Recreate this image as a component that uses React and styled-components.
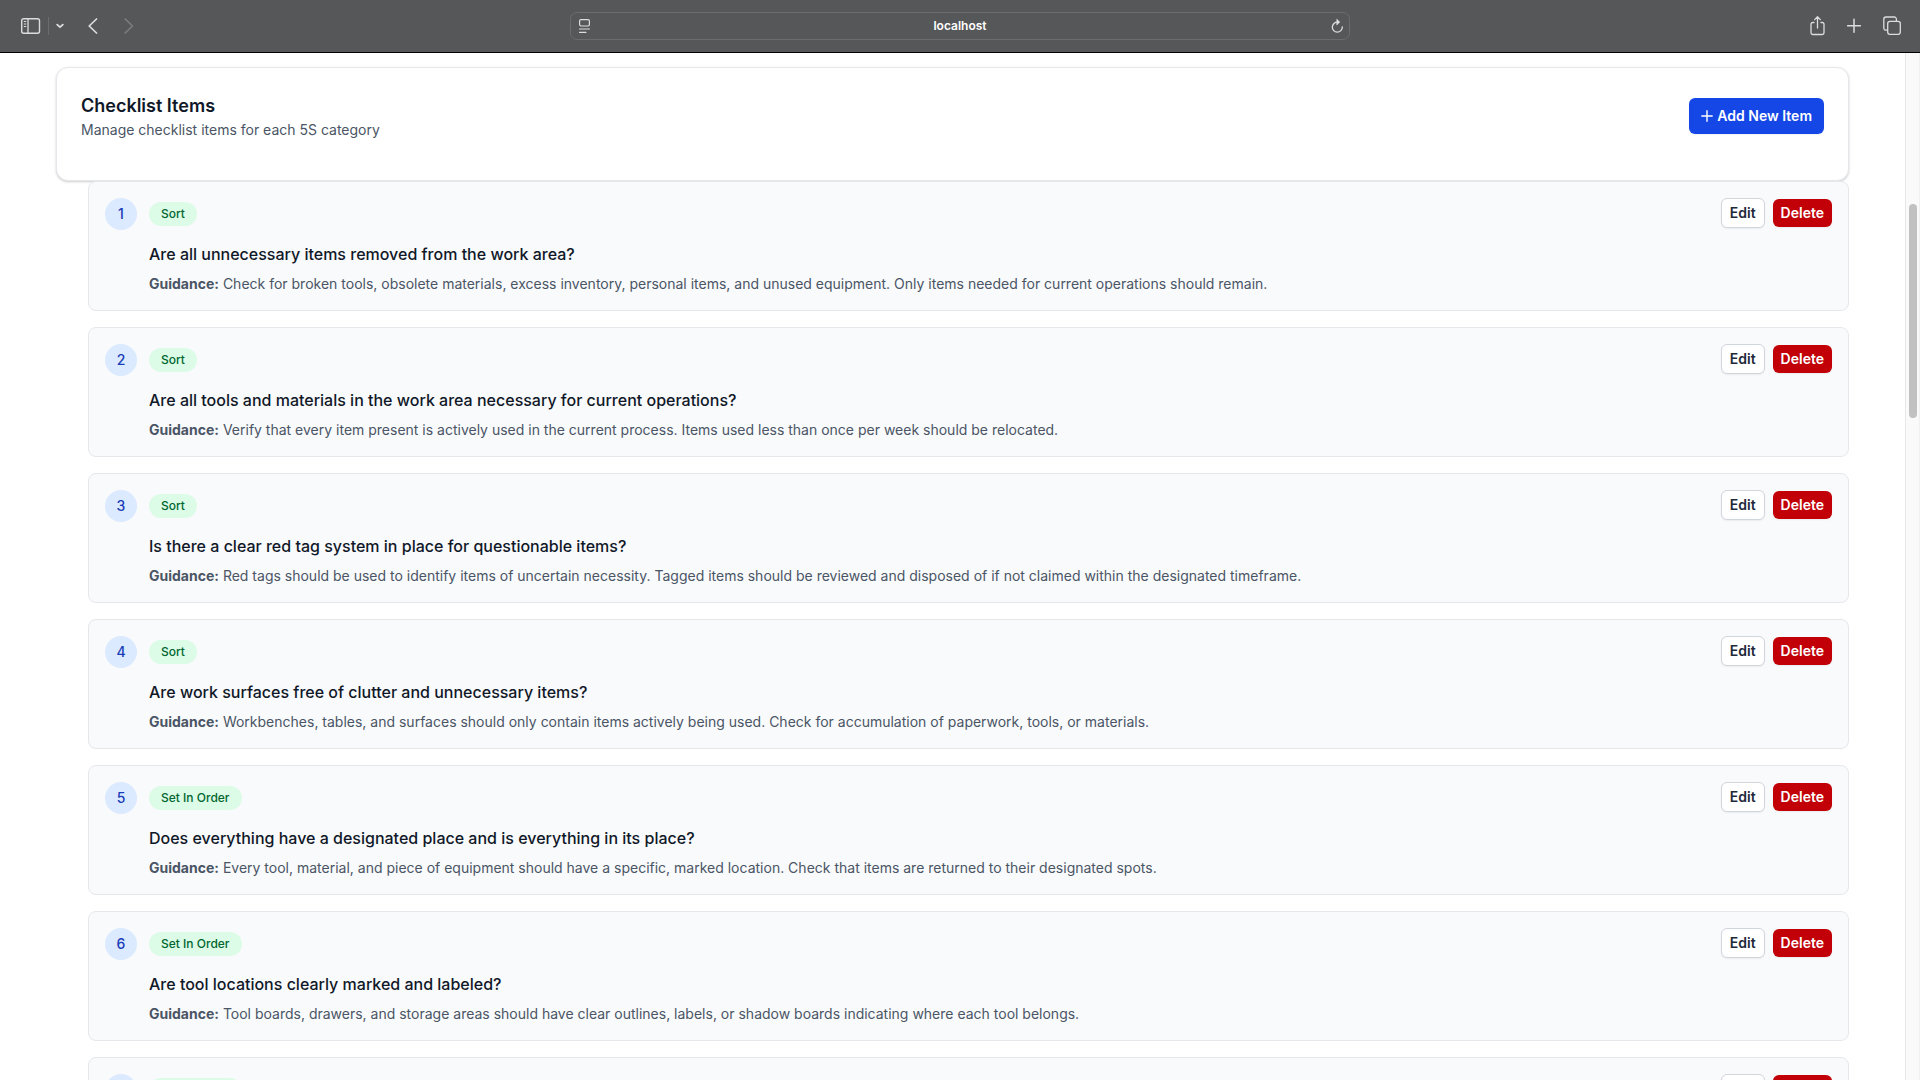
import React from 'react'
import styled, { createGlobalStyle, css } from 'styled-components'

const colors = {
  chrome: '#565759',
  chromeLine: '#6b6c6e',
  chromeIcon: '#dcdddd',
  gray900: '#101828',
  gray800: '#1e2939',
  gray600: '#4a5565',
  gray300: '#d1d5dc',
  gray200: '#e5e7eb',
  gray50: '#f9fafc',
  blue: '#1447e6',
  blue800: '#193cb8',
  blue100: '#dbeafe',
  green100: '#dcfce7',
  green800: '#016630',
  red: '#c10007',
}

const items = [
  {
    category: 'Sort',
    question: 'Are all unnecessary items removed from the work area?',
    guidance:
      'Check for broken tools, obsolete materials, excess inventory, personal items, and unused equipment. Only items needed for current operations should remain.',
  },
  {
    category: 'Sort',
    question:
      'Are all tools and materials in the work area necessary for current operations?',
    guidance:
      'Verify that every item present is actively used in the current process. Items used less than once per week should be relocated.',
  },
  {
    category: 'Sort',
    question: 'Is there a clear red tag system in place for questionable items?',
    guidance:
      'Red tags should be used to identify items of uncertain necessity. Tagged items should be reviewed and disposed of if not claimed within the designated timeframe.',
  },
  {
    category: 'Sort',
    question: 'Are work surfaces free of clutter and unnecessary items?',
    guidance:
      'Workbenches, tables, and surfaces should only contain items actively being used. Check for accumulation of paperwork, tools, or materials.',
  },
  {
    category: 'Set In Order',
    question:
      'Does everything have a designated place and is everything in its place?',
    guidance:
      'Every tool, material, and piece of equipment should have a specific, marked location. Check that items are returned to their designated spots.',
  },
  {
    category: 'Set In Order',
    question: 'Are tool locations clearly marked and labeled?',
    guidance:
      'Tool boards, drawers, and storage areas should have clear outlines, labels, or shadow boards indicating where each tool belongs.',
  },
  {
    category: 'Set In Order',
    question: 'Are walkways and storage areas clearly marked?',
    guidance: 'Floor markings should be visible and kept clear.',
  },
]

const Toolbar = () => (
  <Bar>
    <BarStart>
      <IconButton aria-label="Sidebar">
        <svg width="22" height="18" viewBox="0 0 22 18" fill="none" stroke="currentColor">
          <rect x="2.7" y="1.7" width="17.8" height="14.6" rx="2" strokeWidth="1.4" />
          <path d="M9 2v14" strokeWidth="1.3" />
          <path d="M4.8 4.5h2.4M4.8 7h2.4M4.8 9.5h2.4" />
        </svg>
      </IconButton>
      <Divider />
      <IconButton aria-label="Tab groups">
        <svg width="8" height="6" viewBox="0 0 8 6" fill="none" stroke="currentColor">
          <path d="M1.2 1.6l2.8 2.6 2.8-2.6" strokeWidth="1.8" strokeLinecap="round" strokeLinejoin="round" />
        </svg>
      </IconButton>
      <History>
        <IconButton aria-label="Back">
          <svg width="10" height="16" viewBox="0 0 10 16" fill="none" stroke="currentColor">
            <path d="M8.5 1L1.2 8l7.3 7" strokeWidth="1.7" strokeLinecap="round" strokeLinejoin="round" />
          </svg>
        </IconButton>
        <IconButton aria-label="Forward" disabled>
          <svg width="10" height="16" viewBox="0 0 10 16" fill="none" stroke="currentColor">
            <path d="M1.2 1l7.3 7-7.3 7" strokeWidth="1.7" strokeLinecap="round" strokeLinejoin="round" />
          </svg>
        </IconButton>
      </History>
    </BarStart>

    <Address>
      <IconButton aria-label="Page menu">
        <svg width="14" height="16" viewBox="0 0 14 16" fill="none" stroke="currentColor">
          <rect x="2.6" y="1.6" width="9.8" height="6.4" rx="1.4" strokeWidth="1.2" />
          <path d="M2.5 11h10M2.5 14.3h6.5" strokeWidth="1.2" strokeLinecap="round" />
        </svg>
      </IconButton>
      <AddressInput aria-label="Address" defaultValue="localhost" />
      <IconButton aria-label="Reload">
        <svg width="14" height="16" viewBox="0 0 14 16" fill="none" stroke="currentColor">
          <path d="M8.7 4.2A5 5 0 1 0 13.300 9" strokeWidth="1.3" strokeLinecap="round" />
          <path d="M7.800 1.200l3 2.900-3 2.900z" fill="currentColor" strokeWidth="0.6" strokeLinejoin="round" />
        </svg>
      </IconButton>
    </Address>

    <BarEnd>
      <IconButton aria-label="Share">
        <svg width="16" height="20" viewBox="0 0 16 20" fill="none" stroke="currentColor" strokeWidth="1.3">
          <path d="M5 6.5H3.7A1.7 1.7 0 0 0 2 8.2v8.6a1.7 1.7 0 0 0 1.7 1.7h9.6a1.7 1.7 0 0 0 1.7-1.7V8.2a1.7 1.7 0 0 0-1.7-1.7H12" strokeLinecap="round" />
          <path d="M8.5 12V1M5.7 3.6l2.8-2.8 2.8 2.8" strokeLinecap="round" strokeLinejoin="round" />
        </svg>
      </IconButton>
      <IconButton aria-label="New tab">
        <svg width="14" height="18" viewBox="0 0 14 18" fill="none" stroke="currentColor">
          <path d="M7 2.3v13M0.6 8.8h12.8" strokeWidth="1.5" strokeLinecap="round" />
        </svg>
      </IconButton>
      <IconButton aria-label="Tab overview">
        <svg width="18" height="20" viewBox="0 0 18 20" fill="none" stroke="currentColor" strokeWidth="1.3">
          <rect x="4.7" y="5.4" width="12.6" height="12.9" rx="2.2" />
          <path d="M4.5 14.2H3A2.2 2.2 0 0 1 0.8 12V3.2A2.2 2.2 0 0 1 3 1h8.2a2.2 2.2 0 0 1 2.2 2.2v2" />
        </svg>
      </IconButton>
    </BarEnd>
  </Bar>
)

const Item = ({ number, category, question, guidance }) => (
  <ItemCard>
    <Number>{number}</Number>
    <ItemBody>
      <TagRow>
        <Tag>{category}</Tag>
      </TagRow>
      <Question>{question}</Question>
      <Guidance>
        <strong>Guidance:</strong> {guidance}
      </Guidance>
    </ItemBody>
    <Actions>
      <Button>Edit</Button>
      <Button $variant="danger">Delete</Button>
    </Actions>
  </ItemCard>
)

const App = () => (
  <Window>
    <GlobalStyle />
    <Toolbar />
    <Viewport>
      <Page>
        <HeaderCard>
          <div>
            <Title>Checklist Items</Title>
            <Subtitle>Manage checklist items for each 5S category</Subtitle>
          </div>
          <Button $variant="primary">
            <svg width="12" height="12" viewBox="0 0 12 12" fill="none" stroke="currentColor">
              <path d="M6 0.8v10.4M0.8 6h10.4" strokeWidth="1.4" strokeLinecap="round" />
            </svg>
            Add New Item
          </Button>
        </HeaderCard>
        <List>
          {items.map((item, i) => (
            <Item key={item.question} number={i + 1} {...item} />
          ))}
        </List>
      </Page>
      <ScrollTrack>
        <ScrollThumb />
      </ScrollTrack>
    </Viewport>
  </Window>
)

const GlobalStyle = createGlobalStyle`
  * {
    box-sizing: border-box;
  }

  body {
    margin: 0;
    background: #fff;
    color: ${colors.gray900};
    font-family: Inter, 'Liberation Sans', sans-serif;
    font-size: 14px;
    line-height: 20px;
  }

  button, input {
    font: inherit;
  }

  svg {
    display: block;
    flex: none;
  }
`

const Window = styled.div`
  height: 100vh;
  display: flex;
  flex-direction: column;
  overflow: hidden;
`

const Bar = styled.header`
  flex: none;
  height: 53px;
  padding: 0 19px;
  display: grid;
  grid-template-columns: 1fr minmax(240px, 780px) 1fr;
  align-items: center;
  background: ${colors.chrome};
  border-bottom: 1px solid #000;
`

const BarStart = styled.div`
  display: flex;
  align-items: center;
  gap: 7px;
`

const BarEnd = styled.div`
  display: flex;
  align-items: center;
  justify-content: flex-end;
  gap: 22px;
`

const IconButton = styled.button`
  padding: 0;
  border: 0;
  background: none;
  color: ${colors.chromeIcon};

  &:disabled {
    color: #7b7c7e;
  }
`

const Divider = styled.span`
  width: 1px;
  height: 18px;
  background: ${colors.chromeLine};
`

const History = styled.div`
  display: flex;
  gap: 26px;
  margin-left: 17px;
`

const Address = styled.div`
  height: 28px;
  padding: 0 6px;
  display: flex;
  align-items: center;
  border: 1px solid ${colors.chromeLine};
  border-radius: 7px;
`

const AddressInput = styled.input`
  flex: 1;
  min-width: 0;
  padding: 0;
  border: 0;
  outline: 0;
  background: none;
  color: #fff;
  font-size: 12px;
  font-weight: 600;
  text-align: center;
`

const Viewport = styled.div`
  flex: 1;
  min-height: 0;
  display: flex;
`

const Page = styled.main`
  flex: 1;
  min-width: 0;
  padding: 14px 56px 0;
  overflow: hidden;
`

const HeaderCard = styled.section`
  padding: 24px 24px 40px;
  display: flex;
  align-items: center;
  justify-content: space-between;
  border: 1px solid ${colors.gray200};
  border-radius: 12px;
  background: #fff;
  box-shadow: 0 1px 3px rgba(0, 0, 0, 0.1), 0 1px 2px rgba(0, 0, 0, 0.1);
`

const Title = styled.h2`
  margin: 0;
  font-size: 18px;
  line-height: 28px;
  font-weight: 600;
`

const Subtitle = styled.p`
  margin: 0;
  color: ${colors.gray600};
`

const List = styled.div`
  padding-left: 32px;
  display: flex;
  flex-direction: column;
  gap: 16px;
`

const ItemCard = styled.article`
  padding: 16px;
  display: flex;
  align-items: flex-start;
  border: 1px solid ${colors.gray200};
  border-radius: 8px;
  background: ${colors.gray50};
`

const Number = styled.span`
  flex: none;
  width: 32px;
  height: 32px;
  margin-right: 12px;
  display: flex;
  align-items: center;
  justify-content: center;
  border-radius: 50%;
  background: ${colors.blue100};
  color: ${colors.blue800};
  font-weight: 500;
`

const ItemBody = styled.div`
  flex: 1;
  min-width: 0;
`

const TagRow = styled.div`
  height: 32px;
  margin-bottom: 12px;
  display: flex;
  align-items: center;
`

const Tag = styled.span`
  padding: 4px 12px;
  border-radius: 12px;
  background: ${colors.green100};
  color: ${colors.green800};
  font-size: 12px;
  line-height: 16px;
  font-weight: 500;
`

const Question = styled.h3`
  margin: 0 0 8px;
  font-size: 16px;
  line-height: 24px;
  font-weight: 500;
`

const Guidance = styled.p`
  margin: 0;
  color: ${colors.gray600};

  & strong {
    font-weight: 700;
  }
`

const Actions = styled.div`
  display: flex;
  align-items: center;
  gap: 8px;
`

const variants = {
  primary: css`
    padding: 8px 12px;
    border: 0;
    background: ${colors.blue};
    color: #fff;
  `,
  danger: css`
    border: 0;
    background: ${colors.red};
    color: #fff;
  `,
}

const Button = styled.button`
  padding: 4px 8px;
  display: flex;
  align-items: center;
  gap: 4px;
  border: 1px solid ${colors.gray300};
  border-radius: 6px;
  background: #fff;
  color: ${colors.gray800};
  font-weight: 600;
  white-space: nowrap;
  box-shadow: 0 1px 2px rgba(0, 0, 0, 0.06);
  ${({ $variant }) => variants[$variant]}
`

const ScrollTrack = styled.div`
  flex: none;
  width: 15px;
  padding: 151px 2px 0 3px;
  border-left: 1px solid ${colors.gray200};
  border-right: 1px solid #f0f0f0;
  background: #fafafa;
`

const ScrollThumb = styled.div`
  width: 8px;
  height: 214px;
  border-radius: 4px;
  background: #c1c1c1;
`

export default App
